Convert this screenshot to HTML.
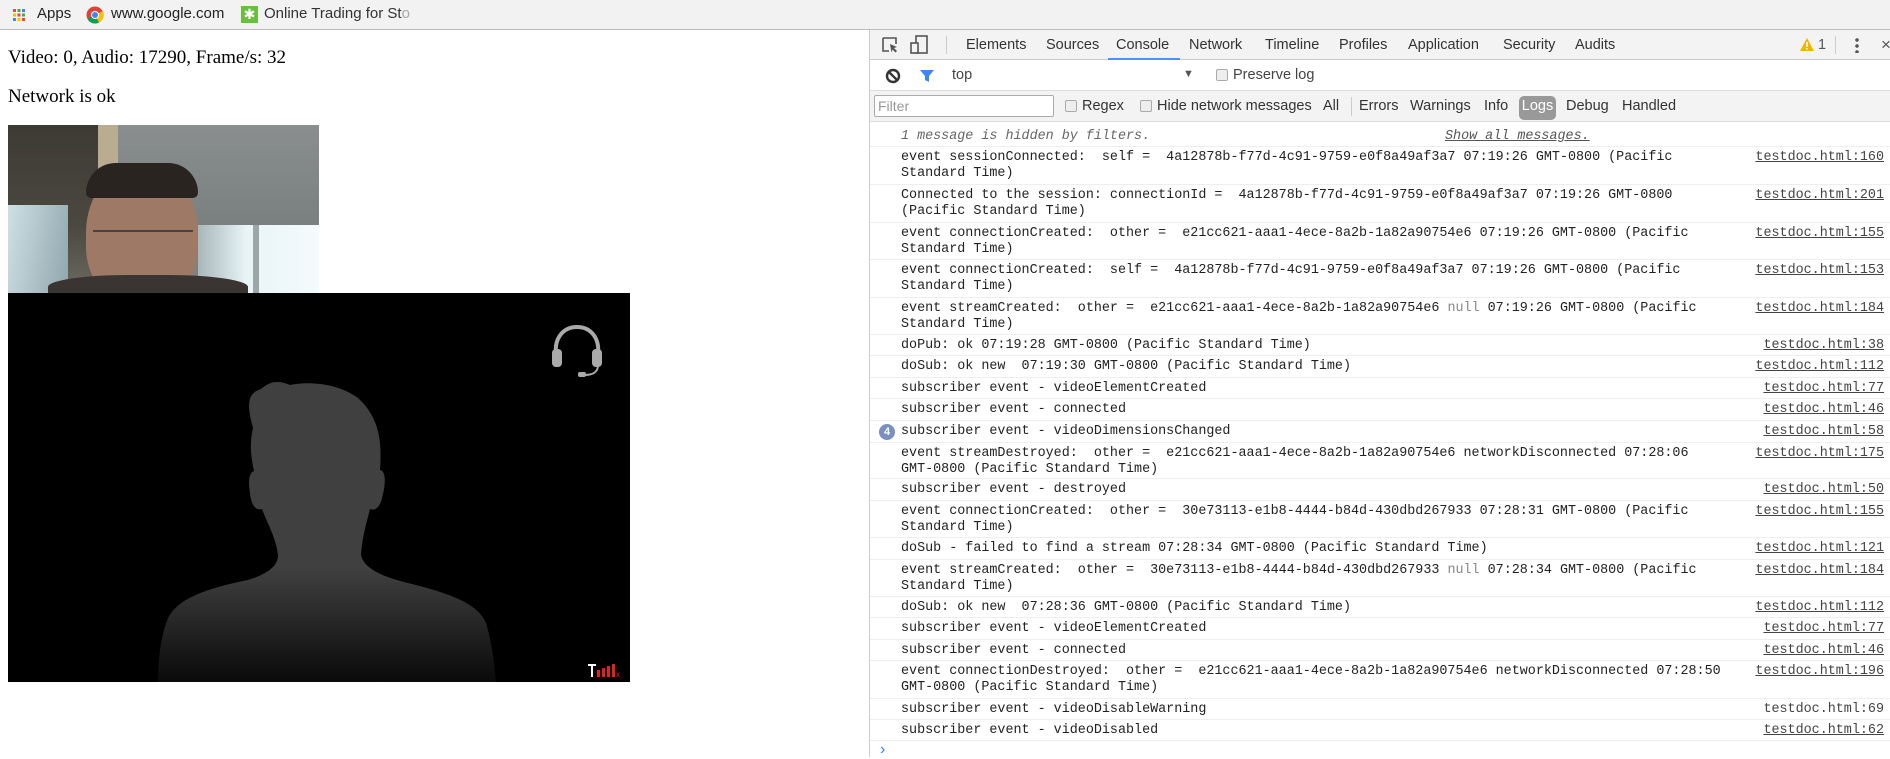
<!DOCTYPE html>
<html><head><meta charset="utf-8"><style>
*{margin:0;padding:0;box-sizing:border-box}
body{width:1890px;height:757px;overflow:hidden;background:#fff;position:relative;font-family:"Liberation Sans",sans-serif}
.a{position:absolute}
.bm{left:0;top:0;width:1890px;height:30px;background:#f2f2f2;border-bottom:1px solid #bbb;font-size:15px;color:#222}
.dt{left:869px;top:30px;width:1021px;height:727px;border-left:1px solid #ccc;background:#fff}
.tb{font-size:14.5px;color:#333;white-space:nowrap}
.row{position:absolute;left:0;width:1021px;border-top:1px solid #eee;font-family:"Liberation Mono",monospace;font-size:13.4px;line-height:16px;color:#222;padding-top:3px}
.row .t{position:absolute;left:31px;top:3px;white-space:pre}
.row .l{position:absolute;right:7px;top:3px;text-decoration:underline;color:#444}
.nl{color:#888}
.cb{display:inline-block;width:12px;height:12px;border:1px solid #aaa;border-radius:2px;background:#eee;position:absolute}
</style></head><body>
<div class="a bm">
 <svg class="a" style="left:13px;top:9px" width="12" height="12"><g fill="#e44"><rect x="0" y="0" width="3" height="3"/></g><rect x="4.5" y="0" width="3" height="3" fill="#4a4"/><rect x="9" y="0" width="3" height="3" fill="#48e"/><rect x="0" y="4.5" width="3" height="3" fill="#fb0"/><rect x="4.5" y="4.5" width="3" height="3" fill="#e44"/><rect x="9" y="4.5" width="3" height="3" fill="#4a4"/><rect x="0" y="9" width="3" height="3" fill="#48e"/><rect x="4.5" y="9" width="3" height="3" fill="#fb0"/><rect x="9" y="9" width="3" height="3" fill="#e44"/></svg>
 <span class="a" style="left:37px;top:5px">Apps</span>
 <svg class="a" style="left:86px;top:6px" width="18" height="18"><circle cx="9" cy="9" r="8.5" fill="#db4437"/><path d="M9 9 L1.5 13 A8.5 8.5 0 0 0 13 16.5Z" fill="#0f9d58"/><path d="M9 9 L13 16.5 A8.5 8.5 0 0 0 17 5Z" fill="#f4c20d"/><circle cx="9" cy="9" r="4" fill="#fff"/><circle cx="9" cy="9" r="3" fill="#4285f4"/></svg>
 <span class="a" style="left:111px;top:5px">www.google.com</span>
 <div class="a" style="left:241px;top:6px;width:17px;height:17px;background:#6bbf3f;color:#fff;font-size:14px;line-height:17px;text-align:center">✱</div>
 <span class="a" style="left:264px;top:5px;color:#333">Online Trading for St<span style="color:#aaa">o</span></span>
</div>

<div class="a" style="left:8px;top:47px;font-family:'Liberation Serif',serif;font-size:19px;color:#000">Video: 0, Audio: 17290, Frame/s: 32</div>
<div class="a" style="left:8px;top:86px;font-family:'Liberation Serif',serif;font-size:19px;color:#000">Network is ok</div>

<!-- webcam photo -->
<div class="a" style="left:8px;top:125px;width:311px;height:168px;overflow:hidden;background:#7d8184">
 <div class="a" style="left:0;top:0;width:95px;height:168px;background:linear-gradient(#3c3b33,#4b4840 60%,#6d6a60)"></div>
 <div class="a" style="left:95px;top:0;width:216px;height:100px;background:linear-gradient(#8a8e8f,#7a7f80)"></div>
 <div class="a" style="left:90px;top:0;width:20px;height:60px;background:#b9ac90"></div>
 <div class="a" style="left:0;top:80px;width:60px;height:88px;background:linear-gradient(100deg,#cfe0e5,#8fa7ad)"></div>
 <div class="a" style="left:190px;top:100px;width:121px;height:68px;background:linear-gradient(90deg,#a9b7ba,#e8f4f6 40%,#f4fbfc)"></div>
 <div class="a" style="left:245px;top:100px;width:6px;height:68px;background:#9aa6a8"></div>
 <div class="a" style="left:78px;top:38px;width:112px;height:140px;border-radius:50% 50% 40% 40%;background:#9e7a66"></div>
 <div class="a" style="left:78px;top:38px;width:112px;height:35px;border-radius:56px 56px 10px 10px;background:#2a2420"></div>
 <div class="a" style="left:85px;top:105px;width:100px;height:8px;border-top:2px solid #444"></div>
 <div class="a" style="left:40px;top:150px;width:200px;height:30px;border-radius:40% 40% 0 0;background:#3a3532"></div>
</div>

<!-- subscriber video -->
<div class="a" style="left:8px;top:293px;width:622px;height:389px;background:#000;overflow:hidden">
 <svg class="a" style="left:0;top:0" width="622" height="389">
  <defs><linearGradient id="fd" x1="0" y1="0" x2="0" y2="1"><stop offset="0" stop-color="#404040"/><stop offset="0.62" stop-color="#404040"/><stop offset="1" stop-color="#0a0a0a"/></linearGradient></defs>
  <path d="M245 135 C238 110 240 100 253 96 C260 90 268 86 282 92 C300 88 330 90 350 105 C372 125 374 150 372 177 C378 178 378 190 374 205 C372 215 366 218 362 216 C358 232 354 245 353 262 C356 275 372 283 400 290 C440 300 470 310 478 330 C484 350 486 370 488 389 L150 389 C150 370 152 345 160 325 C170 305 200 295 240 287 C262 280 270 272 270 262 C268 245 260 232 254 216 C248 218 243 212 242 200 C240 188 241 180 246 178 C242 160 242 148 245 135Z" fill="url(#fd)"/>
 </svg>
 <svg class="a" style="left:540px;top:30px" width="60" height="56" viewBox="0 0 60 56"><path d="M8 32 C6 14 16 4 29 4 C42 4 52 14 50 32" fill="none" stroke="#aaa" stroke-width="4"/><rect x="4" y="26" width="10" height="18" rx="4" fill="#aaa"/><rect x="44" y="26" width="10" height="18" rx="4" fill="#aaa"/><path d="M50 42 C50 50 44 52 36 52" fill="none" stroke="#aaa" stroke-width="2"/><rect x="30" y="49" width="8" height="5" rx="2" fill="#aaa"/></svg>
 <svg class="a" style="left:580px;top:371px" width="36" height="13"><rect x="0" y="0" width="8" height="2" fill="#fff"/><rect x="3" y="0" width="2" height="13" fill="#fff"/><rect x="9" y="6" width="3" height="7" fill="#d22"/><rect x="14" y="4" width="3" height="9" fill="#d22"/><rect x="19" y="2" width="3" height="11" fill="#d22"/><rect x="24" y="0" width="3" height="13" fill="#d22"/><text x="28" y="13" font-size="8" fill="#d22" font-family="Liberation Sans">x</text></svg>
</div>

<!-- devtools -->
<div class="a dt">
 <div class="a" style="left:0;top:0;width:1021px;height:30px;background:#f3f3f3;border-bottom:1px solid #ccc"></div>
 <svg class="a" style="left:11px;top:6px" width="18" height="18"><path d="M2 2h13v6M2 2v13h6" fill="none" stroke="#555" stroke-width="1.6"/><path d="M9 8l7 3-3 1 3 3-1.5 1.5-3-3-1 3z" fill="#555"/></svg>
 <svg class="a" style="left:40px;top:5px" width="20" height="20"><rect x="6" y="1" width="11" height="17" fill="none" stroke="#555" stroke-width="1.6"/><rect x="1" y="8" width="7" height="10" fill="#f3f3f3" stroke="#555" stroke-width="1.6"/></svg>
 <div class="a" style="left:76px;top:6px;width:1px;height:18px;background:#ccc"></div>
 <div class="a tb" style="left:96px;top:7px">Elements</div>
 <div class="a tb" style="left:176px;top:7px">Sources</div>
 <div class="a tb" style="left:246px;top:7px">Console</div>
 <div class="a" style="left:238px;top:28px;width:72px;height:2px;background:#4d90fe"></div>
 <div class="a tb" style="left:319px;top:7px">Network</div>
 <div class="a tb" style="left:395px;top:7px">Timeline</div>
 <div class="a tb" style="left:469px;top:7px">Profiles</div>
 <div class="a tb" style="left:538px;top:7px">Application</div>
 <div class="a tb" style="left:633px;top:7px">Security</div>
 <div class="a tb" style="left:705px;top:7px">Audits</div>
 <svg class="a" style="left:930px;top:8px" width="14" height="13"><path d="M7 0L14 13H0Z" fill="#f2b400"/><rect x="6.2" y="4" width="1.6" height="5" fill="#fff"/><rect x="6.2" y="10" width="1.6" height="1.6" fill="#fff"/></svg>
 <div class="a tb" style="left:948px;top:7px;color:#555">1</div>
 <div class="a" style="left:965px;top:6px;width:1px;height:18px;background:#ccc"></div>
 <div class="a" style="left:985px;top:7px;width:4px;height:16px;background:radial-gradient(circle,#555 1.6px,transparent 2px) 0 0/4px 6px"></div>
 <div class="a tb" style="left:1011px;top:5px;color:#555;font-size:17px">×</div>

 <!-- row 2 -->
 <div class="a" style="left:0;top:30px;width:1021px;height:31px;background:#fff;border-bottom:1px solid #ddd"></div>
 <svg class="a" style="left:15px;top:38px" width="16" height="16"><circle cx="8" cy="8" r="6" fill="none" stroke="#333" stroke-width="2.4"/><path d="M3.8 3.8l8.4 8.4" stroke="#333" stroke-width="2.4"/></svg>
 <svg class="a" style="left:49px;top:38px" width="16" height="16"><path d="M1 2h14l-5 6v6l-4-2V8z" fill="#3b87f5"/></svg>
 <div class="a tb" style="left:82px;top:37px;color:#444">top</div>
 <div class="a" style="left:313px;top:38px;font-size:11px;color:#555">▼</div>
 <span class="cb" style="left:346px;top:39px"></span>
 <div class="a tb" style="left:363px;top:37px;color:#444">Preserve log</div>

 <!-- row 3 -->
 <div class="a" style="left:0;top:61px;width:1021px;height:31px;background:#f3f3f3;border-bottom:1px solid #ddd"></div>
 <div class="a" style="left:4px;top:65px;width:180px;height:22px;border:1px solid #aaa;border-radius:2px;background:#fff;font-size:14px;color:#999;padding:2px 3px">Filter</div>
 <span class="cb" style="left:195px;top:70px"></span>
 <div class="a tb" style="left:212px;top:68px">Regex</div>
 <span class="cb" style="left:270px;top:70px"></span>
 <div class="a tb" style="left:287px;top:68px">Hide network messages</div>
 <div class="a tb" style="left:453px;top:68px">All</div>
 <div class="a" style="left:481px;top:67px;width:1px;height:19px;background:#ccc"></div>
 <div class="a tb" style="left:489px;top:68px">Errors</div>
 <div class="a tb" style="left:540px;top:68px">Warnings</div>
 <div class="a tb" style="left:614px;top:68px">Info</div>
 <div class="a tb" style="left:649px;top:66px;width:37px;height:24px;background:#999;border-radius:5px;color:#fff;text-align:center;padding-top:2px">Logs</div>
 <div class="a tb" style="left:696px;top:68px">Debug</div>
 <div class="a tb" style="left:752px;top:68px">Handled</div>

 <!-- console -->
 <div class="a" style="left:31px;top:99px;font-family:'Liberation Mono',monospace;font-size:13.4px;font-style:italic;color:#666;white-space:pre">1 message is hidden by filters.</div>
 <div class="a" style="left:575px;top:99px;font-family:'Liberation Mono',monospace;font-size:13.4px;font-style:italic;color:#555;text-decoration:underline">Show all messages.</div>

 <div class="row" style="top:116px;height:38px"><span class="t">event sessionConnected:  self =  4a12878b-f77d-4c91-9759-e0f8a49af3a7 07:19:26 GMT-0800 (Pacific
Standard Time)</span><span class="l">testdoc.html:160</span></div>
 <div class="row" style="top:154px;height:38px"><span class="t">Connected to the session: connectionId =  4a12878b-f77d-4c91-9759-e0f8a49af3a7 07:19:26 GMT-0800
(Pacific Standard Time)</span><span class="l">testdoc.html:201</span></div>
 <div class="row" style="top:192px;height:37px"><span class="t">event connectionCreated:  other =  e21cc621-aaa1-4ece-8a2b-1a82a90754e6 07:19:26 GMT-0800 (Pacific
Standard Time)</span><span class="l">testdoc.html:155</span></div>
 <div class="row" style="top:229px;height:38px"><span class="t">event connectionCreated:  self =  4a12878b-f77d-4c91-9759-e0f8a49af3a7 07:19:26 GMT-0800 (Pacific
Standard Time)</span><span class="l">testdoc.html:153</span></div>
 <div class="row" style="top:267px;height:37px"><span class="t">event streamCreated:  other =  e21cc621-aaa1-4ece-8a2b-1a82a90754e6 <span class="nl">null</span> 07:19:26 GMT-0800 (Pacific
Standard Time)</span><span class="l">testdoc.html:184</span></div>
 <div class="row" style="top:304px;height:21px"><span class="t">doPub: ok 07:19:28 GMT-0800 (Pacific Standard Time)</span><span class="l">testdoc.html:38</span></div>
 <div class="row" style="top:325px;height:22px"><span class="t">doSub: ok new  07:19:30 GMT-0800 (Pacific Standard Time)</span><span class="l">testdoc.html:112</span></div>
 <div class="row" style="top:347px;height:21px"><span class="t">subscriber event - videoElementCreated</span><span class="l">testdoc.html:77</span></div>
 <div class="row" style="top:368px;height:22px"><span class="t">subscriber event - connected</span><span class="l">testdoc.html:46</span></div>
 <div class="row" style="top:390px;height:22px"><span class="a" style="left:9px;top:3px;width:16px;height:16px;border-radius:8px;background:#7990c0;color:#fff;font-family:'Liberation Sans',sans-serif;font-size:11px;font-weight:bold;line-height:16px;text-align:center">4</span><span class="t">subscriber event - videoDimensionsChanged</span><span class="l">testdoc.html:58</span></div>
 <div class="row" style="top:412px;height:36px"><span class="t">event streamDestroyed:  other =  e21cc621-aaa1-4ece-8a2b-1a82a90754e6 networkDisconnected 07:28:06
GMT-0800 (Pacific Standard Time)</span><span class="l">testdoc.html:175</span></div>
 <div class="row" style="top:448px;height:22px"><span class="t">subscriber event - destroyed</span><span class="l">testdoc.html:50</span></div>
 <div class="row" style="top:470px;height:37px"><span class="t">event connectionCreated:  other =  30e73113-e1b8-4444-b84d-430dbd267933 07:28:31 GMT-0800 (Pacific
Standard Time)</span><span class="l">testdoc.html:155</span></div>
 <div class="row" style="top:507px;height:22px"><span class="t">doSub - failed to find a stream 07:28:34 GMT-0800 (Pacific Standard Time)</span><span class="l">testdoc.html:121</span></div>
 <div class="row" style="top:529px;height:37px"><span class="t">event streamCreated:  other =  30e73113-e1b8-4444-b84d-430dbd267933 <span class="nl">null</span> 07:28:34 GMT-0800 (Pacific
Standard Time)</span><span class="l">testdoc.html:184</span></div>
 <div class="row" style="top:566px;height:21px"><span class="t">doSub: ok new  07:28:36 GMT-0800 (Pacific Standard Time)</span><span class="l">testdoc.html:112</span></div>
 <div class="row" style="top:587px;height:22px"><span class="t">subscriber event - videoElementCreated</span><span class="l">testdoc.html:77</span></div>
 <div class="row" style="top:609px;height:21px"><span class="t">subscriber event - connected</span><span class="l">testdoc.html:46</span></div>
 <div class="row" style="top:630px;height:38px"><span class="t">event connectionDestroyed:  other =  e21cc621-aaa1-4ece-8a2b-1a82a90754e6 networkDisconnected 07:28:50
GMT-0800 (Pacific Standard Time)</span><span class="l">testdoc.html:196</span></div>
 <div class="row" style="top:668px;height:21px"><span class="t">subscriber event - videoDisableWarning</span><span class="l" style="text-decoration:none">testdoc.html:69</span></div>
 <div class="row" style="top:689px;height:22px;border-bottom:1px solid #eee"><span class="t">subscriber event - videoDisabled</span><span class="l">testdoc.html:62</span></div>
 <div class="a" style="left:10px;top:711px;color:#367cf1;font-size:16px">›</div>
</div>
</body></html>
